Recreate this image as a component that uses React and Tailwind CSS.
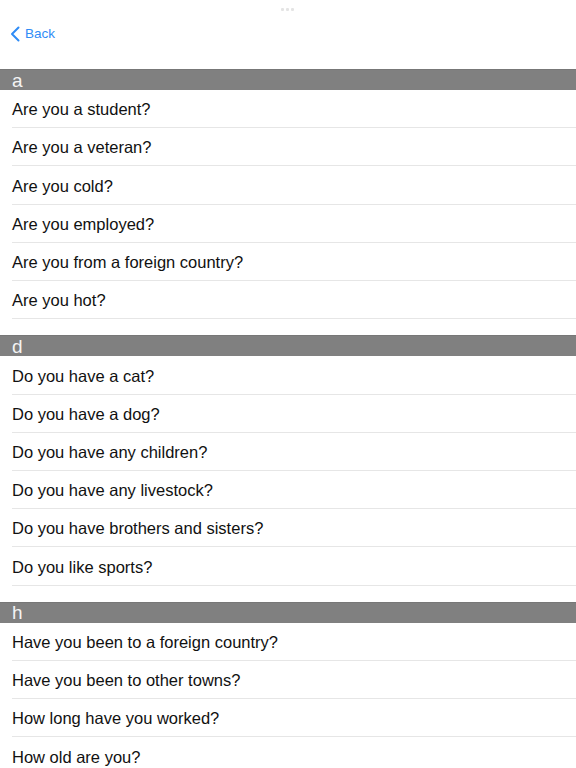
import React from "react";

const sections = [
  { letter: "a", items: ["Are you a student?", "Are you a veteran?", "Are you cold?", "Are you employed?", "Are you from a foreign country?", "Are you hot?"] },
  { letter: "d", items: ["Do you have a cat?", "Do you have a dog?", "Do you have any children?", "Do you have any livestock?", "Do you have brothers and sisters?", "Do you like sports?"] },
  { letter: "h", items: ["Have you been to a foreign country?", "Have you been to other towns?", "How long have you worked?", "How old are you?"] },
];

export default function App() {
  return (
    <div className="w-[576px] h-[768px] overflow-hidden bg-white" style={{ fontFamily: '"Liberation Sans", Arial, sans-serif' }}>
      <div className="h-[69px] relative">
        <div className="absolute left-[281px] top-[8px] flex gap-[2px]">
          <span className="w-[3px] h-[3px] rounded-[1px] bg-[#e4e4e4]" />
          <span className="w-[3px] h-[3px] rounded-[1px] bg-[#e4e4e4]" />
          <span className="w-[3px] h-[3px] rounded-[1px] bg-[#e4e4e4]" />
        </div>
        <div className="flex items-center pt-[26px] pl-[10px] gap-[5px] text-[#2f8cf6]">
          <svg width="10" height="16" viewBox="0 0 10 16" fill="none">
            <path d="M8.5 1.5L2 8l6.5 6.5" stroke="#2f8cf6" strokeWidth="2" strokeLinecap="round" strokeLinejoin="round" />
          </svg>
          <span className="text-[13.5px] leading-none">Back</span>
        </div>
      </div>
      {sections.map((s) => (
        <div key={s.letter} className="mb-[16.3px]">
          <div className="h-[21px] bg-[#808080] border-t border-[#777] flex items-center pl-[12px] text-[#f4f4f4] text-[19px] leading-none">
            {s.letter}
          </div>
          {s.items.map((t) => (
            <div key={t} className="pl-[12px]">
              <div className="h-[38.2px] border-b border-[#e6e6e6] flex items-center pt-[2px] text-[16.5px] text-[#111]">
                {t}
              </div>
            </div>
          ))}
        </div>
      ))}
    </div>
  );
}
